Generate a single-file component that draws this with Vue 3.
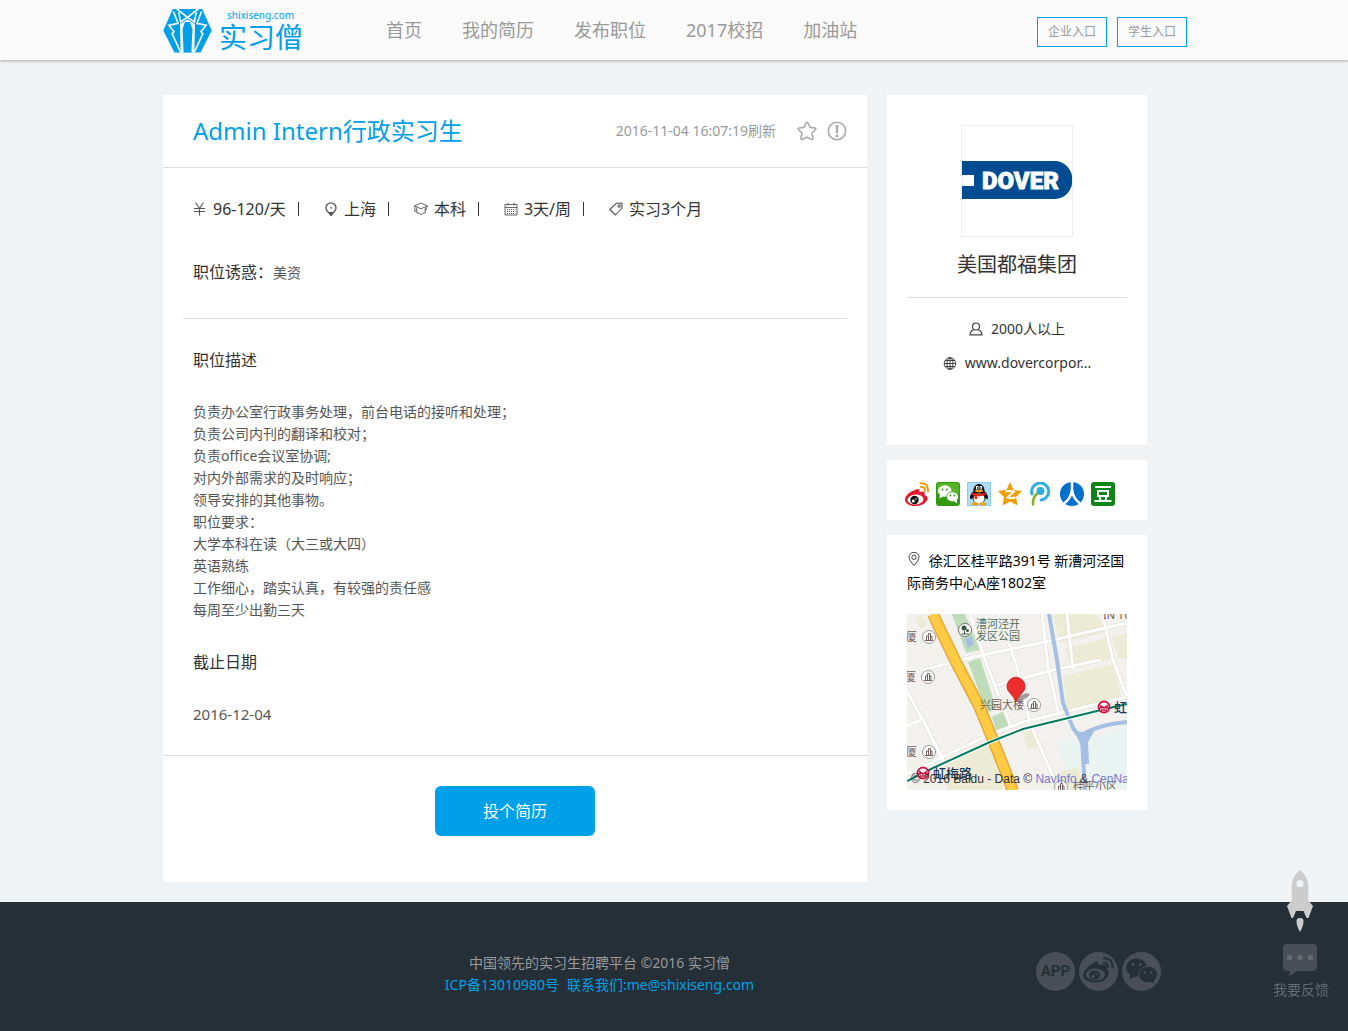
<script setup>
const navItems = ['首页', '我的简历', '发布职位', '2017校招', '加油站']

const facts = [
  { icon: 'yuan', text: '96-120/天' },
  { icon: 'pin', text: '上海' },
  { icon: 'cap', text: '本科' },
  { icon: 'calendar', text: '3天/周' },
  { icon: 'tag', text: '实习3个月' },
]

const description = [
  '负责办公室行政事务处理，前台电话的接听和处理；',
  '负责公司内刊的翻译和校对；',
  '负责office会议室协调;',
  '对内外部需求的及时响应；',
  '领导安排的其他事物。',
  '职位要求：',
  '大学本科在读（大三或大四）',
  '英语熟练',
  '工作细心，踏实认真，有较强的责任感',
  '每周至少出勤三天',
]

const buildings = [[22, 23], [21, 63], [22, 138], [127, 91], [154, 173]]
const stations = [[197, 93], [16, 159]]
</script>

<template>
  <div class="page">
    <header class="topbar">
      <div class="wrap topbar-inner">
        <a href="#" class="logo" aria-label="实习僧">
          <svg class="logo-mark" viewBox="38 20 150 136" aria-hidden="true">
            <path d="M68 22H158L187 88 153 155H73L39 88Z" fill="#00a0e9" />
            <path d="M113 54L136 68 134 156H92L90 68Z" fill="#fafafa" />
            <path d="M105 62H121L128 84 125 155H101L98 84Z" fill="#00a0e9" />
            <g fill="none" stroke="#fafafa" stroke-width="5">
              <path d="M70 30L84 66 56 72 72 92 66 98 92 154" />
              <path d="M156 30L142 66 170 72 154 92 160 98 134 154" />
              <path d="M78 20L113 48 148 20M86 32L92 62 113 48 134 62 140 32" />
            </g>
          </svg>
          <span class="logo-text">
            <span class="logo-domain">shixiseng.com</span>
            <span class="logo-name">实习僧</span>
          </span>
        </a>
        <nav class="nav">
          <a v-for="item in navItems" :key="item" href="#">{{ item }}</a>
        </nav>
        <div class="entries">
          <a href="#">企业入口</a>
          <a href="#">学生入口</a>
        </div>
      </div>
    </header>

    <main class="wrap content">
      <article class="job">
        <header class="job-head">
          <h1>Admin Intern行政实习生</h1>
          <time>2016-11-04 16:07:19刷新</time>
          <button type="button" class="icon-btn" aria-label="收藏">
            <svg viewBox="0 0 20 20" width="20" height="20" fill="none" stroke="#aaa" stroke-width="1.6" stroke-linejoin="round">
              <path d="M10 1.2Q10.8 1.2 11.2 2.2L13 6.4 17.8 7Q19.6 7.4 18.4 8.7L15 12 16 17.2Q16 19 14.4 18.4L10 16.2 5.6 18.4Q4 19 4 17.2L5 12 1.6 8.7Q.4 7.4 2.2 7L7 6.4 8.8 2.2Q9.200 1.2 10 1.2Z" />
            </svg>
          </button>
          <button type="button" class="icon-btn" aria-label="举报">
            <svg viewBox="0 0 20 20" width="20" height="20">
              <circle cx="10" cy="10" r="8.700" fill="none" stroke="#aaa" stroke-width="1.600" />
              <path d="M8.500 4H11.500L10.800 12.500H9.200Z" fill="#aaa" />
              <circle cx="10" cy="15" r="1.500" fill="#aaa" />
            </svg>
          </button>
        </header>

        <ul class="facts">
          <li v-for="fact in facts" :key="fact.text">
            <svg viewBox="0 0 14 14" width="14" height="14" fill="none" stroke="#555" stroke-width="1.1" aria-hidden="true">
              <path v-if="fact.icon === 'yuan'" d="M2.500 .5L6.500 6.500 10.500 .5M6.500 6.500V13.500M1 6.500H12M1 9.500H12" />
              <template v-else-if="fact.icon === 'pin'">
                <path d="M7 12Q2 9.500 2 5.800A5 5 0 0 1 12 5.800Q12 9.500 7 12Z" stroke-width="1.300" />
                <path d="M4.500 10.500L7 13.800 9.500 10.500Z" fill="#555" />
                <circle cx="7" cy="5.800" r=".9" fill="#555" stroke="none" />
              </template>
              <path v-else-if="fact.icon === 'cap'" d="M.5 3.800L7 1.200 13.500 3.800 7 6.800ZM2.800 5.500V11Q4.800 10.300 7 12.800 9.200 10.300 11.200 11V5.500M.8 4V9.500L2.800 8.500M13.200 4L11.500 9" stroke-width=".9" />
              <template v-else-if="fact.icon === 'calendar'">
                <path d="M1 2.500H13V13H1ZM1 5.500H13M4 .5V3.500M10 .5V3.500" stroke-width=".9" />
                <path d="M3 7.500H11.500M3 9.500H11.500M3 11.500H11.500" stroke-dasharray="1 1" stroke-width="1" />
              </template>
              <template v-else>
                <path d="M7.500 1.200L13 1 13 6 6.500 13 .8 7.500Z" stroke-linejoin="round" />
                <circle cx="10.200" cy="3.900" r="1.200" />
              </template>
            </svg>
            <span>{{ fact.text }}</span>
          </li>
        </ul>

        <p class="perk"><span>职位诱惑：</span>美资</p>

        <section class="details">
          <h2>职位描述</h2>
          <div class="lines">
            <p v-for="line in description" :key="line">{{ line }}</p>
          </div>
          <h2>截止日期</h2>
          <p class="deadline">2016-12-04</p>
        </section>

        <div class="apply">
          <button type="button">投个简历</button>
        </div>
      </article>

      <aside class="side">
        <section class="card company">
          <svg class="company-logo" viewBox="0 0 110 110" role="img" aria-label="DOVER">
            <path d="M0 35H93A17 18.500 0 0 1 93 73H0V60H12V49H0Z" fill="#004b91" />
            <text x="20" y="63" font-size="24" font-weight="900" fill="#fff" stroke="#fff" stroke-width=".8">DOVER</text>
          </svg>
          <h2>美国都福集团</h2>
          <p class="size">
            <svg viewBox="0 0 14 14" width="14" height="14" fill="none" stroke="#444" stroke-width="1.200" aria-hidden="true">
              <circle cx="7" cy="4.500" r="3.500" />
              <path d="M4.800 7.800Q1.200 9 1 12.800H13Q12.800 9 9.200 7.800" />
            </svg>
            2000人以上
          </p>
          <p class="site">
            <svg viewBox="0 0 14 14" width="14" height="14" fill="none" stroke="#333" stroke-width=".9" aria-hidden="true">
              <circle cx="7" cy="7.500" r="5.800" />
              <ellipse cx="7" cy="7.500" rx="3" ry="5.800" />
              <path d="M7 1.700V13.300M1.200 7.500H12.800M2 4.500H12M2 10.500H12" />
            </svg>
            <a href="#">www.dovercorpor...</a>
          </p>
        </section>

        <section class="card share">
          <a href="#" aria-label="新浪微博">
            <svg viewBox="0 0 24 24">
              <path d="M9 8.500C11 7 14 6.500 14.500 8.500 14.500 9.500 14 10.300 15 10 18 8.800 20.500 9.500 19.500 12.500 19.500 13.500 23 13.500 22.500 17 21.500 21.500 15.500 24 10 24 4.500 24 0 21.500 0 17.500 0 14 5 9.500 9 8.500Z" fill="#e6162d" />
              <ellipse cx="10.500" cy="17.500" rx="8" ry="5" fill="#fff" transform="rotate(-6 10.500 17.500)" />
              <circle cx="9.500" cy="18" r="4.200" fill="#111" />
              <circle cx="8.300" cy="19" r="1.500" fill="#fff" /><circle cx="11" cy="17" r=".8" fill="#fff" />
              <path d="M16 5Q20 4.500 20 9M15.500 1.300Q23.500 1 23 9.500" fill="none" stroke="#f39800" stroke-width="1.900" stroke-linecap="round" />
            </svg>
          </a>
          <a href="#" aria-label="微信">
            <svg viewBox="0 0 24 24">
              <rect width="24" height="24" rx="3" fill="#319a10" />
              <rect x="1" y="1" width="22" height="11" rx="2" fill="#55b424" />
              <ellipse cx="8.800" cy="9" rx="6.800" ry="5.700" fill="#fff" /><path d="M4 12L3.500 16.500 8 14Z" fill="#fff" />
              <ellipse cx="16.500" cy="14.800" rx="6" ry="5" fill="#fff" stroke="#319a10" stroke-width=".8" /><path d="M18 19L21 21.500 21 17.500Z" fill="#fff" />
              <g fill="#319a10"><circle cx="6.500" cy="7.500" r="1" /><circle cx="11" cy="7.500" r="1" /><circle cx="14.500" cy="13.500" r=".9" /><circle cx="18.500" cy="13.500" r=".9" /></g>
            </svg>
          </a>
          <a href="#" aria-label="QQ好友">
            <svg viewBox="0 0 24 24">
              <rect width="24" height="24" fill="#8ec9ee" /><rect x="1" y="1" width="22" height="22" fill="#acdcf7" />
              <path d="M6.500 9C6 -.5 18 -.5 17.500 9 21 13 22 15.500 20 17.500L18.500 16C18 23 6 23 5.500 16L4 17.500C2 15.500 3 13 6.500 9Z" fill="#111" />
              <ellipse cx="12" cy="16.500" rx="5.500" ry="5" fill="#fff" />
              <ellipse cx="10.200" cy="5.800" rx="1.400" ry="2" fill="#fff" /><ellipse cx="13.800" cy="5.800" rx="1.400" ry="2" fill="#fff" />
              <circle cx="10.500" cy="6" r=".7" /><circle cx="13.500" cy="6" r=".7" />
              <ellipse cx="12" cy="9" rx="4" ry="1.200" fill="#f8a000" />
              <path d="M5.500 10.500Q12 13 18.500 10.500L18.500 13Q13 15 10 14V17H7.500V13.500L5 13Z" fill="#e3251b" />
              <ellipse cx="8" cy="22" rx="3.500" ry="1.400" fill="#f8a000" /><ellipse cx="16" cy="22" rx="3.500" ry="1.400" fill="#f8a000" />
            </svg>
          </a>
          <a href="#" aria-label="QQ空间">
            <svg viewBox="0 0 24 24">
              <path d="M12 0L15.500 7.800 24 9 18 15 19.500 23.500 12 19.500 4.500 23.500 6 15 0 9 8.500 7.800Z" fill="#f29b05" />
              <path d="M7.500 9.500Q12 8.500 16 9.500L9.500 15.500Q14 16.500 17.500 15.500" fill="none" stroke="#fff" stroke-width="1.900" />
            </svg>
          </a>
          <a href="#" aria-label="腾讯微博">
            <svg viewBox="0 0 24 24" fill="none" stroke-linecap="round">
              <path d="M4 22.500Q3 15 10 10" stroke="#79b51c" stroke-width="2.500" />
              <path d="M3 12A8.500 8.500 0 1 1 12 18" stroke="#32addb" stroke-width="3" />
              <circle cx="11.500" cy="9" r="4" fill="#32addb" />
            </svg>
          </a>
          <a href="#" aria-label="人人网">
            <svg viewBox="0 0 24 24">
              <circle cx="12" cy="12" r="12" fill="#0070cf" />
              <path d="M12 0V7Q11.500 16 4 21.500M12 7Q12.500 16 20 21.500" fill="none" stroke="#fff" stroke-width="2.600" />
            </svg>
          </a>
          <a href="#" aria-label="豆瓣">
            <svg viewBox="0 0 24 24">
              <rect width="24" height="24" rx="3" fill="#0f8419" />
              <path d="M4 5H20M3.500 19H20.500M7 9H17V14H7ZM8.500 14L9.500 18.500M15.500 14L14.500 18.500" fill="none" stroke="#fff" stroke-width="2" />
            </svg>
          </a>
        </section>

        <section class="card place">
          <p class="address">
            <svg viewBox="0 0 14 14" width="14" height="14" fill="none" stroke="#444" stroke-width="1" aria-hidden="true">
              <path d="M7 13.500Q2 8.500 2 5.300A5 5 0 0 1 12 5.300Q12 8.500 7 13.500Z" /><circle cx="7" cy="5.300" r="2.200" />
            </svg>
            徐汇区桂平路391号 新漕河泾国际商务中心A座1802室
          </p>
          <div class="map">
            <svg viewBox="0 0 220 176" role="img" aria-label="地图">
              <rect width="220" height="176" fill="#f3f1ee" />
              <g fill="#ecebd6">
                <path d="M146 0H190L200 18 153 29ZM158 35L200 24 206 45 165 54ZM205 22L220 19V44H211ZM156 62L206 50 215 85 160 97Z" />
                <path d="M36 146L82 128 97 176H40ZM116 118L124 116 132 132 120 136ZM146 161L170 152 178 176H150ZM8 4L16 1 20 12 13 14Z" />
              </g>
              <path d="M184 124L220 112V176H184L180 150ZM150 127L170 124 175 150 158 157Z" fill="#e9f4f2" />
              <g fill="#bedcb9">
                <path d="M45 0H58L73 36 59 39ZM61 48L73 44 89 94 80 99ZM85 103L97 97 104 113 90 120Z" />
              </g>
              <path d="M58 25L65 22 66 31 61 34Z" fill="#a5bfe3" />
              <g fill="none" stroke="#dddad0" stroke-width="4">
                <path d="M16 56L66 43 133 29 220 9M63 0L77 43 104 113M92 0L110 53 123 109 152 176M135 0L141 53 152 101M160 0L166 55M196 3L206 46 220 83M90 71L146 56 193 46M0 160L80 122 116 108 220 83M0 77L18 110 38 150M0 112L14 106" />
              </g>
              <g fill="none" stroke="#fff" stroke-width="3">
                <path d="M16 56L66 43 133 29 220 9M63 0L77 43 104 113M92 0L110 53 123 109 152 176M135 0L141 53 152 101M160 0L166 55M196 3L206 46 220 83M90 71L146 56 193 46M0 160L80 122 116 108 220 83M0 77L18 110 38 150M0 112L14 106" />
              </g>
              <path d="M142 0L150 46 156 89 166 114 175 126 178 176M172 123Q188 111 220 108" fill="none" stroke="#a5bfe3" stroke-width="4" />
              <path d="M164 112Q172 122 188 116L181 128 182 150H178Q176 130 164 112Z" fill="#a5bfe3" />
              <path d="M26 0L33 15 50 50 72 92 86 126 94 146 106 177" fill="none" stroke="#e5a73a" stroke-width="12" />
              <path d="M26 0L33 15 50 50 72 92 86 126 94 146 106 177" fill="none" stroke="#ffcb45" stroke-width="9" />
              <path d="M0 167L26 154 83 128 116 115 190 97 220 90" fill="none" stroke="#fff" stroke-width="4" />
              <path d="M0 167L26 154 83 128 116 115 190 97 220 90" fill="none" stroke="#047a5d" stroke-width="2" />

              <g v-for="([x, y]) in buildings" :key="`${x}-${y}`" :transform="`translate(${x} ${y})`">
                <circle r="6.500" fill="#fff" stroke="#999" />
                <path d="M-4 3.500H4M-2.500 3V-1H-.5V-3.500H1.500V-1H3V3M-.5 -1V3M1.500 -1V3" fill="none" stroke="#765f5c" />
              </g>
              <circle cx="58" cy="16" r="6.500" fill="#fff" stroke="#777" />
              <path d="M57.500 17V20M54.500 20H62" stroke="#34583b" /><circle cx="57" cy="14" r="2.500" fill="#34583b" /><circle cx="60.500" cy="16.500" r="1.500" fill="#34583b" />
              <g v-for="([x, y]) in stations" :key="`${x}-${y}`" :transform="`translate(${x} ${y})`">
                <circle r="5.500" fill="#fff" stroke="#ce1445" stroke-width="1.800" />
                <path d="M-5 1H-3V-1L0 1 3 -1V1H5M-3 3H3" fill="none" stroke="#ce1445" stroke-width="1.600" />
              </g>
              <g class="map-labels">
                <text x="69" y="14" fill="#54705a">漕河泾开</text>
                <text x="69" y="26" fill="#54705a">发区公园</text>
                <text x="-1" y="27">厦</text>
                <text x="-2" y="67">厦</text>
                <text x="-1" y="142">厦</text>
                <text x="73" y="95">兴园大楼</text>
                <text x="166" y="176">桂平小区</text>
                <text x="196" y="5">IN TU</text>
                <text x="207" y="98" class="station">虹</text>
                <text x="26" y="164" class="station">虹梅路</text>
              </g>
              <ellipse cx="116" cy="83" rx="7" ry="2.500" fill="#777" opacity=".7" transform="rotate(-25 116 83)" />
              <path d="M109 88Q107 83 103 79A9 9 0 1 1 115 79Q111 83 109 88Z" fill="#ed2d2d" stroke="#b91f1f" stroke-width=".8" />
            </svg>
            <p class="credit">© 2016 Baidu - Data © <a href="#">NavInfo</a> &amp; <a href="#">CenNavi</a></p>
          </div>
        </section>
      </aside>
    </main>

    <footer class="footer">
      <div class="wrap footer-inner">
        <div class="legal">
          <p>中国领先的实习生招聘平台 ©2016 实习僧</p>
          <p><a href="#">ICP备13010980号</a><a href="mailto:me@shixiseng.com">联系我们:me@shixiseng.com</a></p>
        </div>
        <div class="social">
          <a href="#" class="app">APP</a>
          <a href="#" aria-label="微博">
            <svg viewBox="0 0 39 39">
              <circle cx="19.500" cy="19.500" r="19.500" fill="#484f56" />
              <path d="M16 10Q20 8 19.500 13 28 11 27.500 16 31 19 29 24 25 31 15 30.500 4 29 4 23 5 16 16 10Z" fill="#252f38" />
              <ellipse cx="16.500" cy="22.500" rx="9.500" ry="6" fill="#484f56" />
              <ellipse cx="15.500" cy="23" rx="5.500" ry="4.500" fill="#252f38" />
              <circle cx="14" cy="24.500" r="1.800" fill="#484f56" /><circle cx="17.500" cy="22" r="1" fill="#484f56" />
              <path d="M24 11Q29 10 29 16M24 6.500Q34 5 33.500 16.500" fill="none" stroke="#252f38" stroke-width="2.200" />
            </svg>
          </a>
          <a href="#" aria-label="微信">
            <svg viewBox="0 0 39 39">
              <circle cx="19.500" cy="19.500" r="19.500" fill="#484f56" />
              <ellipse cx="14.500" cy="15.500" rx="10.500" ry="9" fill="#252f38" /><path d="M8 22L8 27 14 24Z" fill="#252f38" />
              <ellipse cx="26" cy="22.500" rx="9.500" ry="8.300" fill="#252f38" stroke="#484f56" /><path d="M27 29L32 31.500 32 27Z" fill="#252f38" />
              <g fill="#484f56"><circle cx="11" cy="12.500" r="1.500" /><circle cx="18.500" cy="12.500" r="1.500" /><circle cx="23" cy="20.500" r="1.200" /><circle cx="29" cy="20.500" r="1.200" /></g>
            </svg>
          </a>
        </div>
      </div>
    </footer>

    <div class="floating">
      <button type="button" aria-label="回到顶部">
        <svg viewBox="0 0 26 62" width="26" height="62" fill="#ccc">
          <path d="M13 0Q21.500 6 21.500 19L21 30 26 36 21.500 48H19.500L16.500 41H9L6 48H4.500L0 36 5 30 4.500 19Q4.500 6 13 0Z" />
          <circle cx="13" cy="13.500" r="3.600" fill="#eff3f6" />
          <path d="M9.500 51Q9.500 48 13 48 16.500 48 16.500 51 16.500 56 13 62 9.500 56 9.500 51Z" />
        </svg>
      </button>
      <button type="button" class="feedback">
        <svg viewBox="0 0 34 32" width="34" height="32">
          <path d="M4 0H30Q34 0 34 4V23Q34 27 30 27H13Q11 31 5 32 7 30 7 27H4Q0 27 0 23V4Q0 0 4 0Z" fill="#484f56" />
          <g fill="#656b71"><circle cx="6.500" cy="13.500" r="2.700" /><circle cx="17" cy="13.500" r="2.700" /><circle cx="27.500" cy="13.500" r="2.700" /></g>
        </svg>
        <span>我要反馈</span>
      </button>
    </div>
  </div>
</template>

<style>
body {
  margin: 0;
  background: #eff3f6;
}
</style>

<style scoped>
.page {
  font-family: "Noto Sans", "Noto Sans CJK SC", sans-serif;
  font-size: 14px;
  line-height: 22px;
  color: #555;
}
h1, h2, p, ul {
  margin: 0;
  padding: 0;
  font-weight: 400;
}
a {
  color: inherit;
  text-decoration: none;
}
button {
  padding: 0;
  border: 0;
  background: none;
  font: inherit;
  color: inherit;
  cursor: pointer;
}
svg {
  display: block;
}
.wrap {
  box-sizing: border-box;
  max-width: 1026px;
  margin: 0 auto;
  padding-left: 2px;
}

.topbar {
  background: #fafafa;
  box-shadow: 0 1px 3px rgba(0, 0, 0, 0.3);
}
.topbar-inner {
  display: flex;
  align-items: center;
  height: 60px;
}
.logo {
  display: flex;
  gap: 7px;
  width: 223px;
  color: #00a0e9;
}
.logo-mark {
  width: 49px;
  height: 45px;
}
.logo-text {
  display: flex;
  flex-direction: column;
}
.logo-domain {
  padding-left: 8px;
  font-size: 10px;
  line-height: 14px;
}
.logo-name {
  font-size: 28px;
  line-height: 30px;
}
.nav {
  display: flex;
  flex: 1;
  gap: 40px;
  font-size: 18px;
  color: #999;
}
.entries {
  display: flex;
  gap: 10px;
  padding-top: 4px;
}
.entries a {
  box-sizing: border-box;
  width: 70px;
  border: 1px solid #00a0e9;
  font-size: 12px;
  line-height: 28px;
  text-align: center;
  color: #999;
}

.content {
  display: flex;
  align-items: flex-start;
  gap: 20px;
  padding-top: 35px;
  padding-right: 40px;
  padding-bottom: 20px;
}
.job {
  flex: 1;
  background: #fff;
}
.job-head {
  display: flex;
  align-items: center;
  height: 72px;
  padding: 0 20px 0 30px;
  border-bottom: 1px solid #ddd;
  color: #999;
}
.job-head h1 {
  flex: 1;
  font-size: 24px;
  line-height: 32px;
  color: #00a0e9;
}
.job-head time {
  margin-right: 11px;
}
.icon-btn {
  margin-left: 10px;
}
.facts {
  display: flex;
  gap: 25px;
  padding: 30px 30px 0;
  list-style: none;
  font-size: 16px;
  color: #333;
}
.facts li {
  display: flex;
  align-items: center;
  gap: 6px;
}
.facts li:not(:last-child)::after {
  content: "";
  width: 1px;
  height: 14px;
  margin-left: 6px;
  background: #333;
}
.perk {
  margin: 0 20px;
  padding: 41px 10px 34px;
  border-bottom: 1px solid #ddd;
}
.perk span,
.details h2 {
  font-size: 16px;
  color: #333;
}
.details {
  padding: 30px;
}
.lines {
  padding: 30px 0;
}
.deadline {
  padding-top: 30px;
  font-size: 15px;
}
.apply {
  padding: 30px 0 46px;
  border-top: 1px solid #ddd;
  text-align: center;
}
.apply button {
  width: 160px;
  border-radius: 6px;
  background: #00a0e9;
  font-size: 16px;
  line-height: 50px;
  color: #fff;
}

.side {
  display: flex;
  flex-direction: column;
  gap: 15px;
  width: 260px;
}
.card {
  padding: 0 20px;
  background: #fff;
}
.company {
  padding-top: 30px;
  padding-bottom: 59px;
  text-align: center;
  color: #333;
}
.company-logo {
  width: 110px;
  height: 110px;
  margin: 0 auto;
  border: 1px solid #eee;
  font-family: Roboto, sans-serif;
}
.company h2 {
  padding: 13px 0 17px;
  border-bottom: 1px solid #ddd;
  font-size: 20px;
  line-height: 30px;
}
.company p {
  display: flex;
  align-items: center;
  justify-content: center;
  gap: 8px;
  padding-bottom: 12px;
}
.company .size {
  padding-top: 20px;
}
.share {
  display: flex;
  gap: 7px;
  padding: 22px 18px 14px;
}
.share svg {
  width: 24px;
  height: 24px;
}
.place {
  padding-top: 15px;
  padding-bottom: 20px;
}
.address {
  color: #000;
}
.address svg {
  display: inline-block;
  margin-right: 4px;
}
.map {
  position: relative;
  margin-top: 20px;
  overflow: hidden;
}
.map svg {
  width: 100%;
}
.map-labels {
  font-size: 11px;
  fill: #765f5c;
}
.map-labels .station {
  font-size: 13px;
  font-weight: 500;
  fill: #163a5c;
}
.credit {
  position: absolute;
  bottom: 0;
  left: 4px;
  font-family: "Liberation Sans", sans-serif;
  font-size: 12px;
  white-space: nowrap;
  color: #333;
}
.credit a {
  color: #77c;
}

.footer {
  background: #252f38;
  color: #999;
}
.footer-inner {
  display: flex;
  padding-top: 50px;
  padding-right: 26px;
  padding-bottom: 35px;
}
.legal {
  flex: 1;
  text-align: center;
}
.legal a {
  color: #00a0e9;
}
.legal a + a {
  margin-left: 8px;
}
.social {
  display: flex;
  gap: 4px;
}
.social a {
  width: 39px;
  height: 39px;
}
.social .app {
  border-radius: 50%;
  background: #484f56;
  font-family: Roboto, sans-serif;
  font-size: 15px;
  font-weight: 700;
  line-height: 39px;
  text-align: center;
  color: #252f38;
}

.floating {
  position: fixed;
  right: 19px;
  bottom: 30px;
  display: flex;
  flex-direction: column;
  align-items: center;
  gap: 12px;
}
.floating svg {
  margin-right: 3px;
}
.feedback {
  display: flex;
  flex-direction: column;
  align-items: center;
  gap: 3px;
  color: #656b71;
}
</style>
